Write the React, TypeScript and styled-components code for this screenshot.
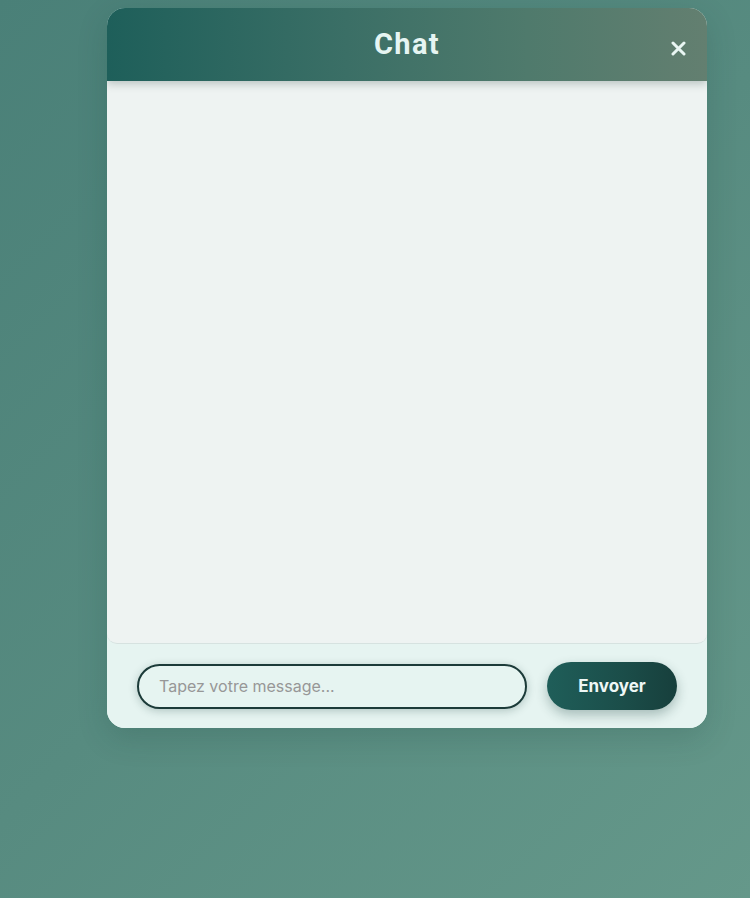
import React from "react";
import styled, { createGlobalStyle } from "styled-components";

const Global = createGlobalStyle`
  html, body { margin: 0; padding: 0; }
  body {
    width: 750px;
    height: 898px;
    overflow: hidden;
    background: linear-gradient(135deg, #4a8078 0%, #578b80 50%, #65988a 100%);
    font-family: Inter, "Noto Sans", sans-serif;
  }
`;

const Page = styled.div`
  width: 750px;
  height: 898px;
  box-sizing: border-box;
  padding: 8px 0 0 107px;
`;

const Window = styled.div`
  width: 600px;
  height: 720px;
  border-radius: 18px;
  overflow: hidden;
  display: flex;
  flex-direction: column;
  background: #e6f4f1;
  box-shadow: 0 10px 30px rgba(20, 60, 55, 0.18);
`;

const Header = styled.div`
  height: 73px;
  flex: none;
  position: relative;
  display: flex;
  align-items: center;
  justify-content: center;
  background: linear-gradient(90deg, #1e5f5a 0%, #3b6f66 40%, #4f7a6c 70%, #637f70 100%);
  box-shadow: 0 3px 8px rgba(30, 60, 55, 0.25);
  z-index: 1;
`;

const Title = styled.h1`
  margin: 0;
  font-family: Roboto, "Noto Sans", sans-serif;
  font-weight: 700;
  font-size: 29px;
  letter-spacing: 1.4px;
  color: #e6f5f2;
  padding-bottom: 1px;
`;

const Close = styled.button`
  position: absolute;
  right: 19px;
  top: 30px;
  width: 20px;
  height: 20px;
  padding: 0;
  border: none;
  background: transparent;
  display: flex;
  align-items: center;
  justify-content: center;
  cursor: pointer;
`;

const Messages = styled.div`
  flex: 1;
  background: #eef3f2;
  border-bottom: 1px solid #d6e2e0;
  border-radius: 0 0 10px 10px;
`;

const Footer = styled.form`
  height: 84px;
  flex: none;
  display: flex;
  align-items: center;
  gap: 20px;
  padding: 0 30px;
  background: #e6f4f1;
`;

const Input = styled.input`
  width: 390px;
  height: 45px;
  box-sizing: border-box;
  border: 2px solid #1c3b39;
  border-radius: 23px;
  background: #e6f4f1;
  padding: 0 20px;
  font-family: Inter, "Noto Sans", sans-serif;
  font-size: 16px;
  color: #333;
  outline: none;
  box-shadow: 0 2px 8px rgba(20, 60, 55, 0.25);
  &::placeholder { color: #979797; }
`;

const Send = styled.button`
  width: 130px;
  height: 48px;
  border: none;
  border-radius: 24px;
  background: linear-gradient(90deg, #1f5e59 0%, #1b4d49 60%, #173f3c 100%);
  color: #eef7f5;
  font-family: Inter, "Noto Sans", sans-serif;
  font-weight: 700;
  font-size: 17px;
  box-shadow: 0 5px 12px rgba(20, 60, 55, 0.3);
  cursor: pointer;
`;

export default function App() {
  return (
    <>
      <Global />
      <Page>
        <Window>
          <Header>
            <Title>Chat</Title>
            <Close aria-label="Fermer">
              <svg width="15" height="15" viewBox="0 0 15 15">
                <path d="M2 2 L13 13 M13 2 L2 13" stroke="#e9f6f3" strokeWidth="3" strokeLinecap="round" />
              </svg>
            </Close>
          </Header>
          <Messages />
          <Footer onSubmit={(e) => e.preventDefault()}>
            <Input placeholder="Tapez votre message..." />
            <Send type="submit">Envoyer</Send>
          </Footer>
        </Window>
      </Page>
    </>
  );
}
